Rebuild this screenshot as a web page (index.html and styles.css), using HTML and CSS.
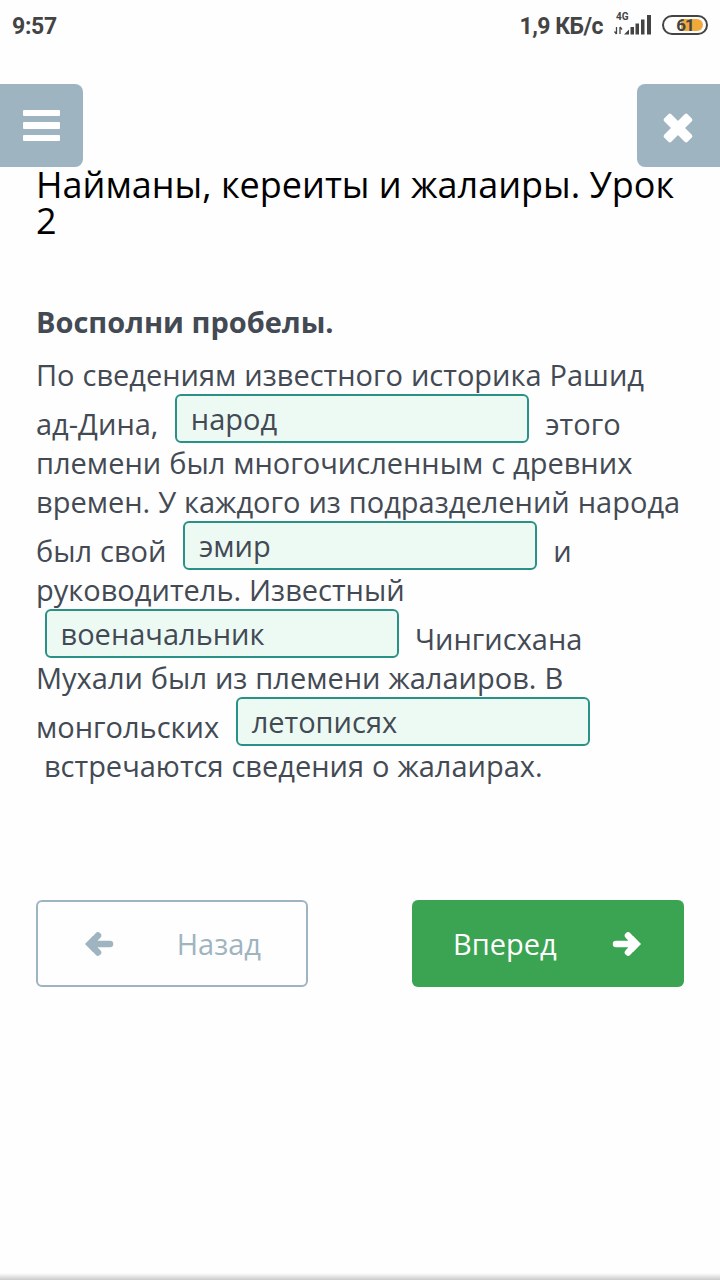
FILE: index.html
```html
<!DOCTYPE html>
<html lang="ru">
<head>
  <meta charset="UTF-8" />
  <meta name="viewport" content="width=device-width, initial-scale=1.0"/>
  <title>Урок 2</title>
  <link rel="stylesheet" href="styles.css">
</head>
<body>
  <div class="status-bar">
    <div class="clock">9:57</div>
    <div class="status-right">
      <span class="speed">1,9 КБ/с</span>
      <div class="signal">
        <span class="network">4G</span>
        <svg width="38" height="22" viewBox="0 0 38 22">
          <path d="M2.500 13v7M0.500 17.500l2 2.500M6 20v-7M6 13l2 2.500" fill="none" stroke="#444" stroke-width="1.3"/>
          <path d="M10 20.500l5-5v5zM16.500 13h3.500v7.500h-3.500zM21.500 9.500h3.500v11h-3.500zM27 5.500h3.500v15h-3.500zM33 1h4v19.500h-4z" fill="#444"/>
        </svg>
      </div>
      <div class="battery"><span class="level">61</span></div>
    </div>
  </div>

  <div class="toolbar">
    <button class="menu-btn" aria-label="Меню">
      <span class="bar"></span>
      <span class="bar"></span>
      <span class="bar"></span>
    </button>
    <button class="close-btn" aria-label="Закрыть">
      <svg width="30" height="30" viewBox="0 0 30 30">
        <g fill="#fff" transform="rotate(45 15 15)">
          <rect x="-1.500" y="10" width="33" height="10" rx="2"/>
          <rect x="10" y="-1.500" width="10" height="33" rx="2"/>
        </g>
      </svg>
    </button>
  </div>

  <div class="container">
    <h1 class="title">Найманы, кереиты и жалаиры. Урок<br>2</h1>

    <h2 class="task">Восполни пробелы.</h2>

    <p class="text">
      По сведениям известного историка Рашид<br>
      ад-Дина, <span class="blank">народ</span>&nbsp;этого<br>
      племени был многочисленным с древних<br>
      времен. У каждого из подразделений народа<br>
      был свой <span class="blank">эмир</span>&nbsp;и<br>
      руководитель. Известный<br>
      <span class="blank">военачальник</span>&nbsp;Чингисхана<br>
      Мухали был из племени жалаиров. В<br>
      монгольских <span class="blank">летописях</span><br>
      &nbsp;встречаются сведения о жалаирах.
    </p>

    <div class="buttons">
      <button class="btn back">
        <svg width="30" height="26" viewBox="0 0 30 26">
          <path d="M14 4.500L6 13l8 8.500M7 13h19" fill="none" stroke="#9fb4c1" stroke-width="6.500" stroke-linecap="round"/>
          <path d="M1 13l8-8v16z" fill="#9fb4c1"/>
        </svg>
        <span>Назад</span>
      </button>
      <button class="btn next">
        <span>Вперед</span>
        <svg width="30" height="26" viewBox="0 0 30 26">
          <path d="M16 4.500L24 13l-8 8.500M23 13H4" fill="none" stroke="#fff" stroke-width="6.500" stroke-linecap="round"/>
          <path d="M29 13l-8-8v16z" fill="#fff"/>
        </svg>
      </button>
    </div>
  </div>

  <div class="bottom-shadow"></div>
</body>
</html>
```

FILE: styles.css
```css
* {
  box-sizing: border-box;
}

body {
  margin: 0;
  height: 1280px;
  display: flex;
  flex-direction: column;
  background-color: #fefefe;
  font-family: "Open Sans", "Noto Sans", sans-serif;
  color: #434a54;
  overflow: hidden;
}

button {
  font-family: inherit;
  border: none;
  padding: 0;
  cursor: pointer;
}

svg {
  display: block;
  overflow: visible;
}

.status-bar {
  height: 84px;
  padding: 12px 11px 0 12px;
  display: flex;
  justify-content: space-between;
  align-items: flex-start;
  font-family: Roboto, sans-serif;
  font-weight: bold;
  font-size: 23px;
  line-height: 30px;
  color: #444;
}

.clock {
  letter-spacing: -0.3px;
}

.speed {
  letter-spacing: -0.5px;
}

.status-right {
  display: flex;
}

.signal {
  width: 38px;
  margin-left: 11px;
  padding-top: 2px;
  position: relative;
}

.network {
  position: absolute;
  top: 0;
  left: 2px;
  font-size: 10px;
  line-height: 10px;
}

.battery {
  width: 46px;
  height: 20px;
  margin: 3px 1px 0 10px;
  padding: 2px 3px;
  border: 2px solid #444;
  border-radius: 10px;
}

.level {
  display: block;
  height: 12px;
  border-radius: 6px;
  background: linear-gradient(to right, transparent 38%, #f2a93b 38%);
  font-size: 17px;
  line-height: 13px;
  letter-spacing: -1px;
  text-align: center;
}

.toolbar {
  height: 83px;
  display: flex;
  justify-content: space-between;
}

.menu-btn,
.close-btn {
  width: 83px;
  height: 83px;
  display: flex;
  justify-content: center;
  align-items: center;
  background-color: #9fb4c1;
}

.menu-btn {
  flex-direction: column;
  gap: 6px;
  border-radius: 0 8px 8px 0;
}

.close-btn {
  padding: 4px 1px 0 0;
  border-radius: 8px 0 0 8px;
}

.bar {
  width: 37px;
  height: 6.5px;
  border-radius: 1px;
  background-color: #fff;
}

.container {
  padding: 0 36px;
  flex: 1;
}

.title {
  margin: 0;
  font-weight: normal;
  font-size: 36px;
  line-height: 36px;
  color: #000;
  white-space: nowrap;
}

.task {
  margin: 63px 0 13px;
  font-size: 29px;
  line-height: 40px;
}

.text {
  margin: 0;
  font-size: 29px;
  line-height: 39px;
  word-spacing: 0.4px;
  white-space: nowrap;
}

.blank {
  display: inline-block;
  width: 354px;
  height: 49px;
  margin: 0 8.5px;
  padding: 3px 14px;
  vertical-align: bottom;
  border: 2px solid #2a9187;
  border-radius: 6px;
  background-color: #edfaf4;
}

.buttons {
  margin-top: 115px;
  display: flex;
  justify-content: space-between;
}

.btn {
  width: 272px;
  height: 87px;
  display: flex;
  justify-content: space-between;
  align-items: center;
  border-radius: 6px;
  font-size: 29px;
}

.back {
  padding: 0 45px 0 46px;
  border: 2px solid #9fb4c1;
  background-color: #fefefe;
  color: #9fb4c1;
}

.next {
  padding: 0 42px 0 41px;
  background-color: #3ba452;
  color: #fff;
}

.bottom-shadow {
  height: 7px;
  background: linear-gradient(#fefefe, #cbcbcb);
}
```
